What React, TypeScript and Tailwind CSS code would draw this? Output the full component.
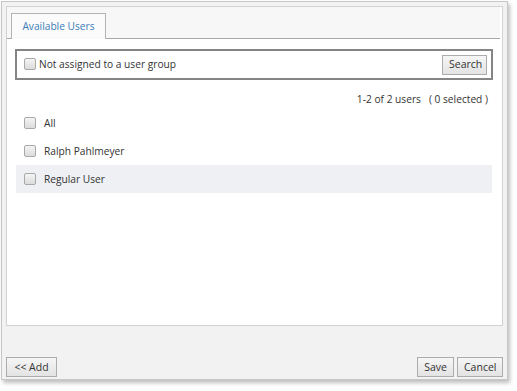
const Box = () => (
    <span className="inline-block w-[12px] h-[12px] rounded-[2px] border border-[#a9a9a9] bg-gradient-to-b from-[#f4f4f4] to-[#dcdcdc] shrink-0" />
);

const Btn = ({ label, className = "" }: { label: string; className?: string }) => (
    <button className={"h-[20px] border border-[#acacac] bg-gradient-to-b from-[#f6f6f6] to-[#e3e3e3] text-[#333] text-[10.5px] leading-none px-[6px] " + className}>
        {label}
    </button>
);

const users = ["All", "Ralph Pahlmeyer", "Regular User"];

export default function App() {
    return (
        <div className="w-[517px] h-[391px] bg-white pt-[1px] pl-[1px] text-[#333]" style={{ fontFamily: '"Open Sans", "Noto Sans", sans-serif' }}>
            <div className="w-[507px] h-[379px] border border-[#c6c6c6] bg-[#f2f2f2] shadow-[2px_3px_4px_rgba(0,0,0,0.25)] flex flex-col px-[4px] pt-[4px] pb-[1px]">
                <div className="h-[320px] border border-[#d2d2d2] bg-white">
                    <div className="h-[32px] bg-[#f7f7f7] border-b border-[#a8a8a8] mr-[2px] flex items-end pl-[4px]">
                        <div className="h-[26px] w-[95px] -mb-[1px] border border-[#b3b3b3] border-b-0 bg-[#fbfbfb] flex items-center justify-center text-[10.2px] text-[#3b7dba]">
                            Available Users
                        </div>
                    </div>
                    <div className="px-[8px] pt-[10px] pr-[9px]">
                        <div className="h-[31px] border-2 border-[#858585] flex items-center justify-between pl-[7px] pr-[4px]">
                            <div className="flex items-center gap-[3px] text-[10.2px]">
                                <Box />
                                <span>Not assigned to a user group</span>
                            </div>
                            <Btn label="Search" className="w-[45px] px-0" />
                        </div>
                        <div className="text-right text-[10.2px] pr-[5px] mt-[14px] leading-none">
                            1-2 of 2 users&nbsp;&nbsp;&nbsp;( 0 selected )
                        </div>
                        <div className="mt-[5px] mx-[1px]">
                            {users.map((u, i) => (
                                <div key={u} className={"h-[28px] flex items-center gap-[8px] pl-[8px] text-[10.2px] " + (i === 2 ? "bg-[#eef0f3]" : "")}>
                                    <Box />
                                    <span>{u}</span>
                                </div>
                            ))}
                        </div>
                    </div>
                </div>
                <div className="flex-1 flex items-end justify-between pb-[1px]">
                    <Btn label="<< Add" className="w-[51px] px-0" />
                    <div className="flex gap-[3px]">
                        <Btn label="Save" className="w-[37px] px-0" />
                        <Btn label="Cancel" className="w-[46px] px-0" />
                    </div>
                </div>
            </div>
        </div>
    );
}
